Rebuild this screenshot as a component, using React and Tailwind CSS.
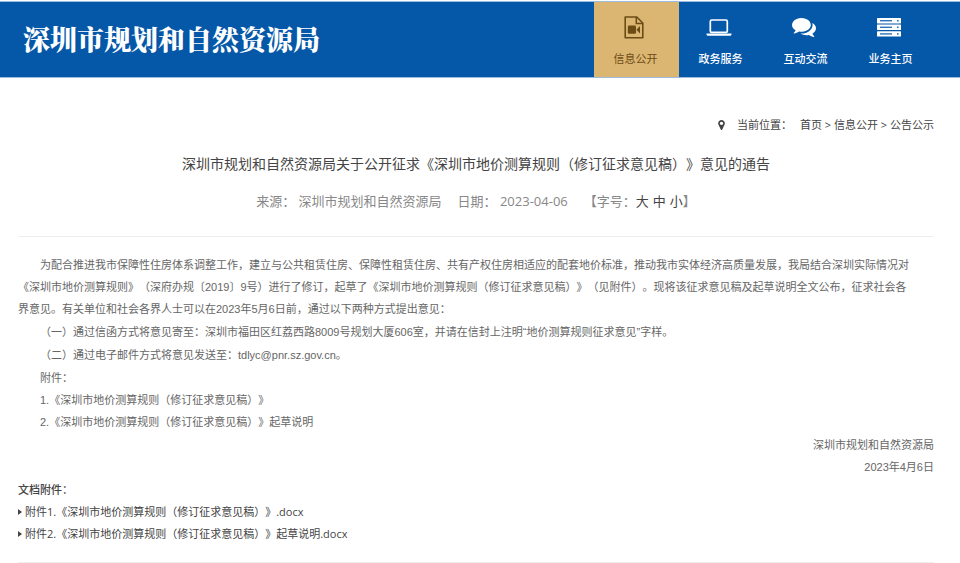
import React from 'react';

function FileVideoIcon() {
  return (
    <svg className="h-[23px] w-5" viewBox="0 0 20 23" aria-hidden="true">
      <path d="M1.2 1h11.6l6 6V21.8H1.2z" fill="none" stroke="currentColor" strokeWidth="1.6" strokeLinejoin="round" />
      <path d="M12.3 1v6.4h6.4" fill="none" stroke="currentColor" strokeWidth="1.5" />
      <rect x="3.8" y="9.6" width="8.2" height="8.2" rx="1.4" fill="currentColor" />
      <path d="M12.4 13.7l3.6-3.8v7.6z" fill="currentColor" />
    </svg>
  );
}

function LaptopIcon() {
  return (
    <svg className="h-[17px] w-[26px]" viewBox="0 0 26 17" aria-hidden="true">
      <rect x="4.3" y="1" width="17" height="12.4" rx="1.4" fill="none" stroke="currentColor" strokeWidth="1.7" />
      <path d="M0.5 14.6h25v0.9c0 .8-.9 1.3-2 1.3h-21c-1.100 0-2-.5-2-1.300z" fill="currentColor" />
    </svg>
  );
}

function CommentsIcon() {
  return (
    <svg className="h-[19px] w-6" viewBox="0 256 1792 1408" fill="currentColor" aria-hidden="true">
      <path d="M1408 768q0 139-94 257t-256.5 186.5-353.5 68.5q-86 0-176-16-124 88-278 128-36 9-86 16h-3q-11 0-20.5-8t-11.5-21q-1-3-1-6.5t.5-6.5 2-6l2.5-5 3.5-5.5 4-5 4.5-5 4-4.5q5-6 23-25t26-29.5 22.5-29 25-38.5 20.5-44q-124-72-195-177t-71-224q0-139 94-257t256.5-186.5 353.5-68.5 353.5 68.5 256.5 186.5 94 257zm384 256q0 120-71 224.5t-195 176.5q10 24 20.5 44t25 38.5 22.5 29 26 29.5 23 25q1 1 4 4.5t4.5 5 4 5 3.5 5.5l2.5 5 2 6 .5 6.5-1 6.5q-3 14-13 22t-22 7q-50-7-86-16-154-40-278-128-90 16-176 16-271 0-472-132 58 4 88 4 161 0 309-45t264-129q125-92 192-212t67-254q0-77-23-152 129 71 204 178t75 230z" />
    </svg>
  );
}

function ServerIcon() {
  return (
    <svg className="h-[19px] w-6" viewBox="0 0 24 19" aria-hidden="true">
      {[0, 6.6, 13.2].map((y) => (
        <g key={y}>
          <rect x="0" y={y} width="24" height="5.4" rx="0.6" fill="currentColor" />
          <rect x="3" y={y + 2} width="12" height="1.4" fill="#2f74b8" />
          <rect x="20" y={y + 1.9} width="1.6" height="1.6" fill="#2f74b8" />
        </g>
      ))}
    </svg>
  );
}

function MarkerIcon() {
  return (
    <svg className="h-[10px] w-[7px]" viewBox="0 0 1024 1536" fill="currentColor" aria-hidden="true">
      <path d="M768 512q0-106-75-181t-181-75-181 75-75 181 75 181 181 75 181-75 75-181zm256 0q0 109-33 179l-364 774q-16 33-47.5 52t-67.5 19-67.5-19-46.5-52l-365-774q-33-70-33-179 0-212 150-362t362-150 362 150 150 362z" />
    </svg>
  );
}

const navItems = [
  { label: '信息公开', Icon: FileVideoIcon, active: true },
  { label: '政务服务', Icon: LaptopIcon },
  { label: '互动交流', Icon: CommentsIcon },
  { label: '业务主页', Icon: ServerIcon },
];

const attachments = [
  '附件1.《深圳市地价测算规则（修订征求意见稿）》.docx',
  '附件2.《深圳市地价测算规则（修订征求意见稿）》起草说明.docx',
];

export default function App() {
  return (
    <div
      lang="zh-CN"
      className="bg-white pt-px font-['Open_Sans','Noto_Sans_CJK_SC',sans-serif] text-[11px] text-[#666] [text-spacing-trim:space-all]"
    >
      <header className="flex h-[77px] items-stretch justify-between border-y border-[#9bbcdd] bg-[#0557a8] pr-[26px] pl-[23px] text-white">
        <div className="flex items-center font-['Noto_Serif_CJK_SC','Noto_Serif_SC','Source_Han_Serif_SC','Noto_Sans_CJK_SC',serif] text-[27px] font-black">
          深圳市规划和自然资源局
        </div>
        <nav className="flex">
          {navItems.map(({ label, Icon, active }) => (
            <a
              key={label}
              href="#"
              className={
                active
                  ? 'flex w-[85px] flex-col items-center bg-[#dbb572] pt-[11px] pr-0.5 text-[#6b4c15]'
                  : 'flex w-[85px] flex-col items-center pt-[11px] pr-0.5 font-medium text-white'
              }
            >
              <span className="flex h-7 items-center justify-center pr-1">
                <Icon />
              </span>
              <span className="mt-2 leading-5">{label}</span>
            </a>
          ))}
        </nav>
      </header>

      <main className="pr-[26px] pl-[18px]">
        <nav className="mt-9 flex items-center justify-end leading-[22px] text-[#444]">
          <MarkerIcon />
          <span className="ml-3 mr-2">当前位置：</span>
          <span>
            <a href="#">首页</a> &gt; <a href="#">信息公开</a> &gt; <a href="#">公告公示</a>
          </span>
        </nav>

        <h1 className="mt-4 text-center text-sm leading-6 text-[#444]">
          深圳市规划和自然资源局关于公开征求《深圳市地价测算规则（修订征求意见稿）》意见的通告
        </h1>

        <div className="mt-3.5 flex justify-center gap-4 border-b border-[#eee] pb-6 text-[13px] leading-[22px] text-[#888]">
          <span>来源： 深圳市规划和自然资源局</span>
          <span>日期： 2023-04-06</span>
          <span className="flex">
            【字号：
            <span className="flex gap-1 text-[#444]">
              <button type="button">大</button>
              <button type="button">中</button>
              <button type="button">小</button>
            </span>
            】
          </span>
        </div>

        <article className="mt-[17px] flex flex-col gap-px font-['Liberation_Sans','Noto_Sans_CJK_SC',sans-serif] leading-[22px]">
          <p className="pr-5 indent-[2em]">
            为配合推进我市保障性住房体系调整工作，建立与公共租赁住房、保障性租赁住房、共有产权住房相适应的配套地价标准，推动我市实体经济高质量发展，我局结合深圳实际情况对《深圳市地价测算规则》（深府办规〔2019〕9号）进行了修订，起草了《深圳市地价测算规则（修订征求意见稿）》（见附件）。现将该征求意见稿及起草说明全文公布，征求社会各界意见。有关单位和社会各界人士可以在2023年5月6日前，通过以下两种方式提出意见：
          </p>
          <p className="indent-[2em]">
            （一）通过信函方式将意见寄至：深圳市福田区红荔西路8009号规划大厦606室，并请在信封上注明“地价测算规则征求意见”字样。
          </p>
          <p className="indent-[2em]">（二）通过电子邮件方式将意见发送至：tdlyc@pnr.sz.gov.cn。</p>
          <div className="indent-[2em]">
            <p>附件：</p>
            <p>1.《深圳市地价测算规则（修订征求意见稿）》</p>
            <p>2.《深圳市地价测算规则（修订征求意见稿）》起草说明</p>
          </div>
          <div className="text-right">
            <p>深圳市规划和自然资源局</p>
            <p>2023年4月6日</p>
          </div>
        </article>

        <section className="mt-px border-b border-[#eee] pb-[17px] leading-[22px] text-[#444]">
          <h2 className="font-medium">文档附件：</h2>
          <ul>
            {attachments.map((name) => (
              <li key={name} className="flex items-center gap-[3px]">
                <svg className="h-[6px] w-1" viewBox="0 0 4 6" fill="currentColor" aria-hidden="true">
                  <path d="M0 0l4 3-4 3z" />
                </svg>
                <a href="#">{name}</a>
              </li>
            ))}
          </ul>
        </section>
      </main>
    </div>
  );
}
